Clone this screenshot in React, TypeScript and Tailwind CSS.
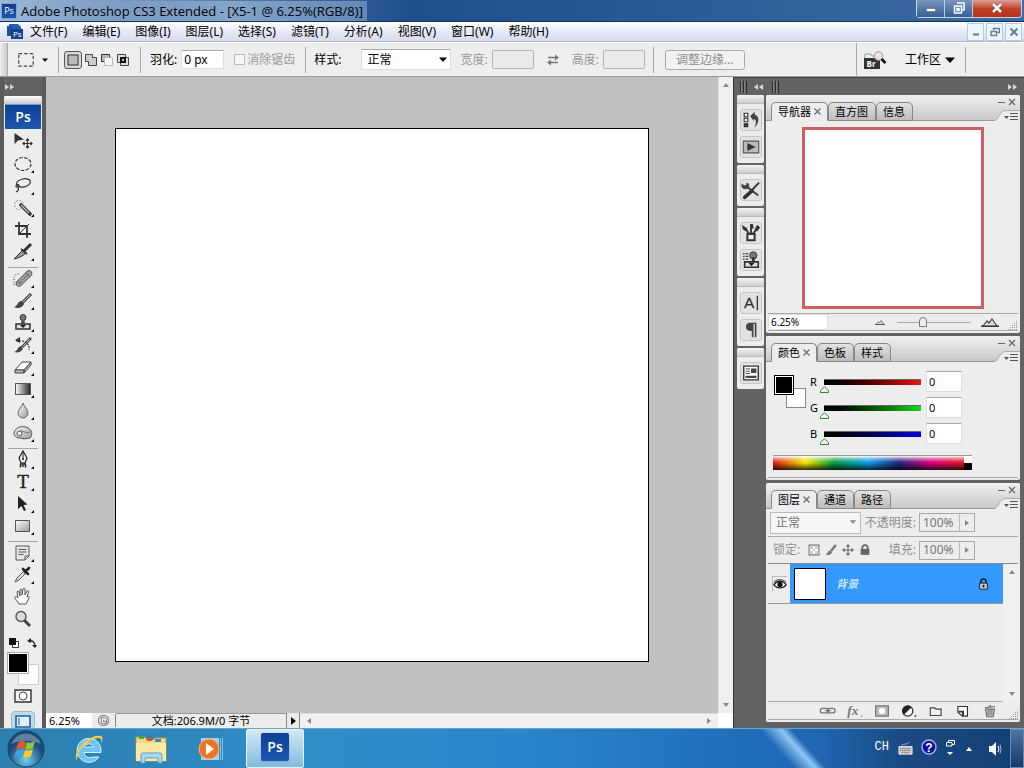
import { useState } from "react";
import type { ReactNode } from "react";
import clsx from "clsx";

const MENUS = ["文件(F)", "编辑(E)", "图像(I)", "图层(L)", "选择(S)", "滤镜(T)", "分析(A)", "视图(V)", "窗口(W)", "帮助(H)"];

interface Tool {
  name: string;
  icon: ReactNode;
  flyout?: boolean;
}

const ink = { stroke: "#333", fill: "none", strokeWidth: 1.2 };

const TOOL_GROUPS: Tool[][] = [
  [
    {
      name: "移动",
      icon: (
        <>
          <path d="M2.500 2v11l3.500-3.500 6-1z" fill="#333" />
          <path d="M15.500 8v9M11 12.500h9M14 9.500l1.500-1.500L17 9.500M14 15.500l1.500 1.500 1.500-1.500M12.500 11L11 12.500l1.500 1.500M18.500 11l1.500 1.500-1.500 1.500" {...ink} />
        </>
      ),
    },
    { name: "椭圆选框", flyout: true, icon: <ellipse cx="11" cy="11" rx="8" ry="6.500" {...ink} strokeDasharray="3.500 1.500" /> },
    {
      name: "套索",
      flyout: true,
      icon: (
        <>
          <ellipse cx="11.500" cy="8" rx="7" ry="4" {...ink} transform="rotate(-12 11 8)" />
          <path d="M5 9c-2 2-1 4 1 3s1-3-1-2M6 12c1 2 0 4-2 5" {...ink} />
        </>
      ),
    },
    {
      name: "快速选择",
      flyout: true,
      icon: (
        <>
          <path d="M9 8l9 9" stroke="#333" strokeWidth="3.600" strokeLinecap="round" />
          <path d="M9 8l8 8" stroke="#bbb" strokeWidth="1.400" />
          <circle cx="7" cy="8" r="4.500" stroke="#777" fill="none" strokeDasharray="1.500 1.500" />
        </>
      ),
    },
    {
      name: "裁剪",
      icon: (
        <>
          <path d="M7 3v12h12M3 7h12v12" stroke="#333" strokeWidth="1.800" fill="none" />
          <path d="M7 15L17 5" stroke="#333" />
        </>
      ),
    },
    {
      name: "切片",
      flyout: true,
      icon: (
        <>
          <path d="M2 18l9-9 3 3c-3 3-7 5-12 6z" fill="#999" stroke="#333" />
          <path d="M9 8l6 5" stroke="#333" strokeWidth="1.800" />
          <path d="M12 10l7-7" stroke="#333" strokeWidth="3" />
        </>
      ),
    },
  ],
  [
    {
      name: "修复画笔",
      flyout: true,
      icon: (
        <>
          <path d="M2 17V9a4 4 0 014-3h2" stroke="#333" fill="none" strokeDasharray="1 1.500" />
          <path d="M7 15.500L17 5.500" stroke="#555" strokeWidth="6.500" strokeLinecap="round" />
          <path d="M7 15.500L17 5.500" stroke="#a5a5a5" strokeWidth="4.800" strokeLinecap="round" />
          <path d="M7 15.500L17 5.500M6 13l3 3M14 5l4 4" stroke="#555" strokeDasharray="1 1.500" strokeWidth="1.500" />
        </>
      ),
    },
    {
      name: "画笔",
      flyout: true,
      icon: (
        <>
          <path d="M2 17c4-1 3-5 7-6l3 3c-2 4-6 5-10 3z" fill="#444" />
          <path d="M10 13l9-9" stroke="#444" strokeWidth="3" />
          <path d="M11 12l7-7" stroke="#ccc" />
        </>
      ),
    },
    {
      name: "仿制图章",
      flyout: true,
      icon: (
        <>
          <circle cx="11" cy="5.500" r="3" fill="#777" stroke="#333" />
          <path d="M9.500 8h3l.5 4h-4z" fill="#555" />
          <path d="M4 12h14v5H4z" fill="#ddd" stroke="#333" strokeWidth="1.500" />
          <path d="M8 13h6l-3 3z" fill="#222" />
        </>
      ),
    },
    {
      name: "历史记录画笔",
      flyout: true,
      icon: (
        <>
          <path d="M2 18c4-1 3-5 7-6l2 3c-2 3-5 4-9 3z" fill="#444" />
          <path d="M10 13l9-9" stroke="#444" strokeWidth="2.600" />
          <path d="M11 12l7-7" stroke="#ccc" />
          <path d="M4 7h6c4 0 8 4 7 9" {...ink} strokeDasharray="2 1" />
          <path d="M3 6l5-3v6z" fill="#333" />
        </>
      ),
    },
    {
      name: "橡皮擦",
      flyout: true,
      icon: (
        <>
          <path d="M3 14l7-8h9l-7 8z" fill="#fff" stroke="#444" />
          <path d="M3 14h9v3H3zM12 14l7-8v3l-7 8z" fill="#bbb" stroke="#444" />
        </>
      ),
    },
    { name: "渐变", flyout: true, icon: <rect x="3.500" y="5.500" width="15" height="11" fill="url(#toolGrad)" stroke="#555" /> },
    { name: "模糊", flyout: true, icon: <path d="M11 3c1 4 5 6 5 10a5 5 0 01-10 0c0-4 4-6 5-10z" fill="url(#softGrad)" stroke="#666" /> },
    {
      name: "海绵",
      flyout: true,
      icon: (
        <>
          <path d="M2 11c1-6 9-8 14-5 4 2 5 7 2 10-3 1-8 1-10 0-4 0-6-2-6-5z" fill="url(#softGrad)" stroke="#555" />
          <circle cx="7.500" cy="11.500" r="2.500" fill="#eee" stroke="#555" />
          <path d="M8 9c3-1 5 3 10 1" stroke="#777" fill="none" />
        </>
      ),
    },
  ],
  [
    {
      name: "钢笔",
      flyout: true,
      icon: (
        <>
          <path d="M11 2l4 7-2 5H9L7 9z" fill="#eee" stroke="#222" strokeWidth="1.200" />
          <path d="M11 2v8" stroke="#222" />
          <circle cx="11" cy="10" r="1" fill="#222" />
          <path d="M8 15h6M8.500 15.500v3M13.500 15.500v3M11 16v2" stroke="#222" strokeWidth="1.500" />
        </>
      ),
    },
    { name: "文字", flyout: true, icon: <text x="11" y="17" textAnchor="middle" fontSize="19" className="font-['Liberation_Serif',serif]" fill="#222" stroke="#222" strokeWidth=".4">T</text> },
    { name: "路径选择", flyout: true, icon: <path d="M6 3v13l3.500-3 2.500 5 2-1-2.500-5 4-.5z" fill="#222" /> },
    { name: "矩形", flyout: true, icon: <path d="M3.500 5.500h14v11h-14z" fill="url(#softGrad)" stroke="#555" /> },
  ],
  [
    {
      name: "注释",
      flyout: true,
      icon: (
        <>
          <path d="M4 4h13v10l-4 4H4z" fill="#e8e8e8" stroke="#555" />
          <path d="M17 14h-4v4M6.500 7.500h8M6.500 10h8M6.500 12.500h5" stroke="#555" fill="none" />
        </>
      ),
    },
    {
      name: "吸管",
      flyout: true,
      icon: (
        <>
          <path d="M3 18l2-4 7-7 2 2-7 7z" fill="#ddd" stroke="#555" />
          <path d="M11 5l5 5M13 8l4-4" stroke="#222" strokeWidth="2.600" strokeLinecap="round" />
        </>
      ),
    },
    {
      name: "抓手",
      icon: (
        <path d="M7 18c-1-3-5-5-4-7 1-1 2 0 3 1L5 6c0-1 2-1 2 0l1 4V4c0-1 2-1 2 0v5l1-6c0-1 2-1 2 0v6l2-4c1-1 2 0 1.500 1L15 11c2-1 3 0 2 1l-3 6z" fill="#fff" stroke="#555" />
      ),
    },
    {
      name: "缩放",
      icon: (
        <>
          <path d="M12 12l6 6" stroke="#444" strokeWidth="3" />
          <circle cx="9" cy="8.500" r="5" fill="#ddd" stroke="#555" strokeWidth="1.400" />
        </>
      ),
    },
  ],
];

const DOCK_GROUPS: Tool[][] = [
  [
    {
      name: "历史记录",
      icon: (
        <>
          <path d="M3.500 3.500h4v4h-4zM3.500 9h4v4h-4z" fill="#fff" stroke="#333" strokeWidth="1.200" />
          <path d="M3 14.500h5V19H3z" fill="#333" />
          <path d="M10 7l5-5v3c6 2 5 10 0 14 2-5 2-9-1-9v2z" fill="#444" />
        </>
      ),
    },
    {
      name: "动作",
      icon: (
        <>
          <path d="M2.500 4.500h17v13h-17z" fill="#bbb" stroke="#555" strokeWidth="1.200" />
          <path d="M7 6.500l9 4.500-9 4.500z" fill="#333" />
        </>
      ),
    },
  ],
  [
    {
      name: "工具预设",
      icon: (
        <>
          <path d="M6 7l13 10" stroke="#444" strokeWidth="2.200" />
          <path d="M1 4l3 2 2-1V3a3.500 3.500 0 01-1 7 4 4 0 01-4-6z" fill="#444" />
          <path d="M20 3l-8 8" stroke="#333" strokeWidth="2" />
          <path d="M12 12l-8 7" stroke="#333" strokeWidth="4" strokeLinecap="round" />
        </>
      ),
    },
  ],
  [
    {
      name: "画笔",
      icon: (
        <>
          <path d="M7 12h8v7H7z" fill="#eee" stroke="#333" strokeWidth="2.200" />
          <path d="M9 12L5 6M11 12V5M13 12l5-6" stroke="#333" strokeWidth="2" />
          <path d="M1 2l6 4-2 3-3-2zM10 1h3l1 5h-4zM15 7l3-5 3 3-3 4z" fill="#333" />
        </>
      ),
    },
    {
      name: "仿制源",
      icon: (
        <>
          <path d="M2 4h2M2 7h2M2 10h2M5 4h3M5 7h3M5 10h3" stroke="#444" strokeWidth="1.500" />
          <circle cx="13.500" cy="6" r="4" fill="#777" stroke="#333" />
          <path d="M12 8h3v5h-3z" fill="#333" />
          <path d="M4 13h15v6H4z" fill="#ddd" stroke="#333" strokeWidth="1.800" />
          <path d="M8 14h7l-3.500 4z" fill="#222" />
        </>
      ),
    },
  ],
  [
    {
      name: "字符",
      icon: (
        <>
          <text x="9" y="17" textAnchor="middle" fontSize="17" className="font-['Liberation_Sans',sans-serif]" fill="#333" stroke="#333" strokeWidth=".3">A</text>
          <path d="M18 3v16" stroke="#333" strokeWidth="1.500" />
        </>
      ),
    },
    { name: "段落", icon: <path d="M17 3v16h-1.800V4.500h-1.500V19h-1.800v-7H10a4.500 4.500 0 010-9z" fill="#444" /> },
  ],
  [
    {
      name: "图层复合",
      icon: (
        <>
          <path d="M3 3.500h16v15H3z" fill="#fff" stroke="#333" strokeWidth="1.500" />
          <path d="M11 6h6v5h-6zM5 14h12v2.500H5z" fill="#444" />
          <path d="M5 6.500h5M5 9h5M5 11.500h5" stroke="#444" />
        </>
      ),
    },
  ],
];

function Glyph({ children, className = "size-[22px]" }: { children: ReactNode; className?: string }) {
  return (
    <svg viewBox="0 0 22 22" className={clsx("shrink-0", className)} aria-hidden="true">
      {children}
    </svg>
  );
}

function Caret({ className }: { className?: string }) {
  return (
    <svg viewBox="0 0 10 6" className={clsx("shrink-0", className)} aria-hidden="true">
      <path d="M0 .5h10L5 6z" fill="currentColor" />
    </svg>
  );
}

function Divider() {
  return <span className="h-[26px] w-px shrink-0 bg-[#a8a8a8]" />;
}

function PsLogo({ className }: { className?: string }) {
  return (
    <span className={clsx("flex items-center justify-center bg-linear-to-b from-[#0f3f96] to-[#1d57b0] font-['Open_Sans',sans-serif] text-white", className)}>
      Ps
    </span>
  );
}

function TitleBar() {
  return (
    <header className="flex h-[22px] shrink-0 items-center border-b border-[#12325c] bg-linear-to-r from-[#9db8d6] via-[#1d4f8c] via-40% to-[#3c6ba3]">
      <PsLogo className="ml-px size-4 border border-[#79a5dd] text-[9px]" />
      <h1 className="ml-1 bg-linear-to-r from-[#b3c7dd00] from-0% via-[#86a5ca] via-60% to-[#6288b6] pr-1 font-['Open_Sans',sans-serif] text-[13px] leading-5 text-black">
        Adobe Photoshop CS3 Extended - [X5-1 @ 6.25%(RGB/8)]
      </h1>
      <div className="mr-0.5 mb-1 ml-auto flex h-[18px] rounded-b border border-t-0 border-[#c5d7ec]">
        <button type="button" aria-label="最小化" className="flex w-7 items-center justify-center border-r border-[#b8cae0] bg-linear-to-b from-[#7896bb] to-[#345f96]">
          <svg viewBox="0 0 12 12" className="size-3"><path d="M1.500 6.500h9v3h-9z" fill="#fff" stroke="#556" strokeWidth=".6" /></svg>
        </button>
        <button type="button" aria-label="还原" className="flex w-7 items-center justify-center border-r border-[#b8cae0] bg-linear-to-b from-[#7896bb] to-[#345f96]">
          <svg viewBox="0 0 12 12" className="size-3"><path d="M4 1h7v7H9M1.500 4h7v7h-7zM4 6.500h2v2H4z" fill="none" stroke="#fff" strokeWidth="1.500" /></svg>
        </button>
        <button type="button" aria-label="关闭" className="flex w-12 items-center justify-center rounded-br bg-linear-to-b from-[#d9a096] via-[#c2402a] to-[#b8301b]">
          <svg viewBox="0 0 12 12" className="size-3"><path d="M2 2l8 8M10 2l-8 8" stroke="#633" strokeWidth="3.600" /><path d="M2 2l8 8M10 2l-8 8" stroke="#fff" strokeWidth="2.600" /></svg>
        </button>
      </div>
    </header>
  );
}

function MenuBar() {
  const box = "flex h-[18px] w-[17px] items-center justify-center border border-[#b4cbe2] bg-[#eef6fd] text-[#5f7d9c]";
  return (
    <nav className="flex h-5 shrink-0 items-center border-b border-[#b4b8c8] bg-linear-to-b from-white via-[#e6eaf6] to-[#d6dcef]">
      <svg viewBox="0 0 16 16" className="ml-[7px] size-4 shrink-0" aria-hidden="true">
        <path d="M2 0h9l3 3v4H2z" fill="#1d62b5" />
        <path d="M0 2h5v10H0z" fill="#1b509c" />
        <path d="M4 5h12v10H4z" fill="#124389" />
        <text x="6" y="13" fontSize="8" fill="#fff" className="font-['Open_Sans',sans-serif]">Ps</text>
      </svg>
      <ul className="ml-[7px] flex gap-[15px] whitespace-nowrap">
        {MENUS.map((m) => (
          <li key={m}>
            <button type="button" className="block text-xs leading-5">{m}</button>
          </li>
        ))}
      </ul>
      <div className="ml-auto flex gap-0.5 pr-0.5">
        <button type="button" aria-label="最小化文档" className={box}>
          <svg viewBox="0 0 10 10" className="size-2.5"><path d="M2 7.500h6" stroke="currentColor" strokeWidth="2" /></svg>
        </button>
        <button type="button" aria-label="还原文档" className={box}>
          <svg viewBox="0 0 10 10" className="size-2.5"><path d="M3.500 3V1.500h6v4H7.500M1 4.500h5.500v4H1z" fill="none" stroke="currentColor" strokeWidth="1.400" /></svg>
        </button>
        <button type="button" aria-label="关闭文档" className={box}>
          <svg viewBox="0 0 10 10" className="size-2.5"><path d="M1.500 1.500l7 7M8.500 1.500l-7 7" stroke="currentColor" strokeWidth="2" /></svg>
        </button>
      </div>
    </nav>
  );
}

function SelectionModes() {
  const modes = [
    { label: "新选区", art: <rect x="2" y="2" width="10" height="10" fill="#bbb" stroke="#333" /> },
    { label: "添加到选区", art: <path d="M1.500 1.500h7v3h4v8h-8v-4h-3z" fill="#ccc" stroke="#444" /> },
    { label: "从选区减去", art: <><path d="M1.500 1.500h8v3h-5v4h-3z" fill="#bbb" stroke="#333" /><path d="M4.500 4.500h8v8h-8z" fill="#f6f6f6" stroke="#bbb" /></> },
    { label: "与选区交叉", art: <><path d="M1.500 1.500h8v8h-8zM4.500 4.500h8v8h-8z" fill="#ddd" stroke="#444" /><path d="M5 5h4v4H5z" fill="#ccc" stroke="#111" strokeWidth="2" /></> },
  ];
  return (
    <div className="flex items-center gap-0.5">
      {modes.map((m, i) => (
        <button
          key={m.label}
          type="button"
          aria-label={m.label}
          className={clsx(i === 0 && "rounded-[3px] border border-[#555] bg-[#d8d8d8] p-px")}
        >
          <svg viewBox="0 0 14 14" className="size-3.5">{m.art}</svg>
        </button>
      ))}
    </div>
  );
}

function OptionsBar() {
  const disabledBox = "ml-1 h-[19px] w-[42px] rounded-xs border border-[#b5b5b5] bg-[#ebebeb]";
  return (
    <div className="flex h-[35px] shrink-0 items-center border-t border-b border-t-white border-b-[#9a9a9a] bg-[#eee] text-xs leading-5 whitespace-nowrap">
      <span className="h-full w-2 shrink-0 border-r border-[#aaa] bg-linear-to-r from-[#eee] to-[#ccc]" />
      <svg viewBox="0 0 16 14" className="ml-2.5 h-3.5 w-4 shrink-0" aria-hidden="true">
        <rect x=".7" y=".7" width="14.500" height="12.500" fill="none" stroke="#444" strokeWidth="1.200" strokeDasharray="3.500 2" />
      </svg>
      <Caret className="mr-2.5 ml-2 h-1 w-1.5" />
      <Divider />
      <div className="mr-2.5 ml-[5px]"><SelectionModes /></div>
      <Divider />
      <label htmlFor="feather" className="ml-[9px]">羽化:</label>
      <input id="feather" defaultValue="0 px" className="ml-1 h-[19px] w-[43px] border border-[#ddd] border-t-[#aaa] bg-white px-0.5 font-['Noto_Sans',sans-serif] text-xs" />
      <label className="mr-2.5 ml-2.5 flex items-center gap-0.5 text-[#9a9a9a]">
        <input type="checkbox" disabled className="size-[11px] appearance-none border border-[#bbb] bg-[#f6f6f6]" />
        消除锯齿
      </label>
      <Divider />
      <label htmlFor="style" className="ml-2">样式:</label>
      <div className="relative ml-5">
        <select id="style" className="block h-[21px] w-[90px] appearance-none border border-[#ddd] border-t-[#aaa] bg-white pl-[5px] text-xs leading-[19px]">
          <option>正常</option>
        </select>
        <Caret className="pointer-events-none absolute top-2 right-1 h-[5px] w-2" />
      </div>
      <label htmlFor="w" className="ml-[9px] text-[#9a9a9a]">宽度:</label>
      <input id="w" disabled className={disabledBox} />
      <svg viewBox="0 0 14 12" className="mr-3 ml-3 h-3 w-3.5 shrink-0" aria-hidden="true">
        <path d="M2 3.500h8M4 8.500h8" stroke="#777" strokeWidth="1.300" />
        <path d="M9 .5l4 3-4 3zM5 5.500l-4 3 4 3z" fill="#777" />
      </svg>
      <label htmlFor="h" className="text-[#9a9a9a]">高度:</label>
      <input id="h" disabled className={disabledBox} />
      <span className="w-2" />
      <Divider />
      <button type="button" disabled className="ml-[11px] h-5 w-20 rounded-[3px] border border-[#aaa] bg-[#f2f2f2] text-xs leading-[18px] text-[#8e8e8e]">
        调整边缘...
      </button>
      <div className="ml-auto flex h-full w-[168px] items-center border-l border-[#aaa]">
        <button type="button" aria-label="转到 Bridge" className="ml-[7px]">
          <svg viewBox="0 0 24 18" className="h-[18px] w-6">
            <path d="M1 3h6l1 2h6v5H1z" fill="#eee" stroke="#999" />
            <path d="M0 7h16v11H0z" fill="#333" />
            <text x="2.500" y="15.500" fontSize="8" fontWeight="700" fill="#fff" className="font-['Open_Sans',sans-serif]">Br</text>
            <circle cx="14.500" cy="5" r="4.300" fill="#e6e6e6" stroke="#999" />
            <path d="M17.500 8l4 4" stroke="#111" strokeWidth="2.600" />
          </svg>
        </button>
        <button type="button" className="ml-[17px] flex items-center gap-1 pr-2.5">工作区<Caret className="h-1.5 w-2.5" /></button>
        <Divider />
      </div>
    </div>
  );
}

function DoubleArrow({ left }: { left?: boolean }) {
  return (
    <svg viewBox="0 0 10 6" className={clsx("h-1.5 w-2.5 shrink-0", left && "rotate-180")} aria-hidden="true">
      <path d="M0 0l4 3-4 3zM5 0l4 3-4 3z" fill="#d8d8d8" />
    </svg>
  );
}

function Toolbox() {
  return (
    <aside className="flex w-[46px] shrink-0 flex-col overflow-hidden border-x-4 border-[#5b5b5b] bg-[#636363]">
      <div className="flex h-[19px] shrink-0 items-center pl-px"><DoubleArrow /></div>
      <div className="flex min-h-0 flex-1 flex-col rounded-t-xs bg-[#ededed]">
        <span className="h-2 shrink-0 rounded-t-xs bg-linear-to-b from-white to-[#c8c8c8]" />
        <PsLogo className="mx-px h-[25px] shrink-0 border-t border-[#6a9be0] text-sm font-semibold" />
        <div className="flex shrink-0 flex-col gap-1 pt-0.5">
          {TOOL_GROUPS.map((group, g) => (
            <div key={g} className={clsx(g > 0 && "mx-1 border-t border-[#a5a5a5]")}>
              {group.map((tool) => (
                <button key={tool.name} type="button" aria-label={tool.name} className="relative mx-auto block size-[22px]">
                  <Glyph>{tool.icon}</Glyph>
                  {tool.flyout && (
                    <svg viewBox="0 0 4 4" className="absolute right-0 bottom-0.5 size-[3px]"><path d="M4 0v4H0z" /></svg>
                  )}
                </button>
              ))}
            </div>
          ))}
        </div>
        <div className="mt-2 flex shrink-0 items-center gap-2 pl-[5px]">
          <button type="button" aria-label="默认颜色">
            <svg viewBox="0 0 10 10" className="size-2.5"><path d="M3.500 3.500h6v6h-6z" fill="#fff" stroke="#333" /><path d="M0 0h7v7H0z" fill="#111" /></svg>
          </button>
          <button type="button" aria-label="切换颜色">
            <svg viewBox="0 0 10 10" className="size-2.5"><path d="M2 3c3-1 6 1 6 5" stroke="#333" strokeWidth="1.500" fill="none" /><path d="M0 3l4-3v5zM5 7h5l-2 3z" fill="#222" /></svg>
          </button>
        </div>
        <div className="relative mt-[5px] ml-1 h-8 w-[31px] shrink-0">
          <button type="button" aria-label="背景色" className="absolute right-0 bottom-0 size-[21px] border border-[#ccc] bg-white" />
          <button type="button" aria-label="前景色" className="absolute top-0 left-0 size-5 border border-white bg-black outline outline-[#aaa]" />
        </div>
        <button type="button" aria-label="快速蒙版" className="mt-1 shrink-0 self-center">
          <svg viewBox="0 0 18 14" className="h-3.5 w-[18px]"><path d="M1 1h16v12H1z" fill="#fff" stroke="#333" strokeWidth="1.400" /><circle cx="9" cy="7" r="4" fill="#fff" stroke="#444" /></svg>
        </button>
        <button type="button" aria-label="屏幕模式" className="mt-2 shrink-0 self-center rounded-sm border border-[#9bb] bg-[#bfd9f0] px-[3px] pt-[3px]">
          <svg viewBox="0 0 16 13" className="h-[13px] w-4"><path d="M1 1h14v11H1z" fill="#dff0ff" stroke="#2b5b9b" strokeWidth="1.600" /><path d="M4 3v7" stroke="#7ab" strokeWidth="2" /></svg>
        </button>
      </div>
    </aside>
  );
}

function Arrow({ dir, color = "#888" }: { dir: "up" | "down" | "left" | "right"; color?: string }) {
  const turn = { up: "", down: "rotate-180", left: "-rotate-90", right: "rotate-90" }[dir];
  return (
    <svg viewBox="0 0 6 4" className={clsx("h-1 w-1.5 shrink-0", turn)} aria-hidden="true">
      <path d="M0 4l3-4 3 4z" fill={color} />
    </svg>
  );
}

function DocumentArea() {
  return (
    <main className="flex min-w-0 flex-1 flex-col border-r border-[#333] bg-[#c0c0c0]">
      <div className="flex min-h-0 flex-1">
        <div className="flex min-w-0 flex-1 items-center justify-center overflow-hidden">
          <div className="aspect-square h-[84%] border border-black bg-white" />
        </div>
        <div className="flex w-[15px] flex-col items-center justify-between border-l border-[#ddd] bg-[#f0f0f0] py-1.5">
          <Arrow dir="up" />
          <Arrow dir="down" />
        </div>
      </div>
      <div className="flex h-[15px] shrink-0 items-center bg-[#ececec] text-[11px] leading-[15px]">
        <input aria-label="显示比例" defaultValue="6.25%" className="h-full w-[46px] bg-white pl-[3px] font-['Noto_Sans',sans-serif] text-[11px]" />
        <span className="flex w-6 justify-center border-r border-[#888]">
          <svg viewBox="0 0 14 14" className="size-[13px]"><circle cx="7" cy="7" r="5.500" fill="#ddd" stroke="#888" strokeWidth="1.400" /><path d="M5 4h3l2 2v4H5zM7 6v2h3" fill="#fff" stroke="#777" /></svg>
        </span>
        <span className="w-[170px] border-t border-[#999] text-center text-[11px] leading-[14px]">文档:206.9M/0 字节</span>
        <button type="button" aria-label="状态栏选项" className="flex h-full w-[14px] items-center justify-center border-x border-[#888]">
          <svg viewBox="0 0 5 8" className="h-2 w-[5px]"><path d="M0 0l5 4-5 4z" /></svg>
        </button>
        <div className="flex h-full flex-1 items-center justify-between border-t border-[#ddd] bg-[#f0f0f0] px-1.5">
          <Arrow dir="left" />
          <Arrow dir="right" />
        </div>
        <span className="h-full w-[15px] bg-white" />
      </div>
    </main>
  );
}

function IconDock() {
  return (
    <div className="flex w-[27px] shrink-0 flex-col gap-0.5">
      {DOCK_GROUPS.map((group, i) => (
        <div key={i} className="rounded-xs bg-[#ececec] pb-[5px]">
          <div className="h-[9px] rounded-t-xs border-b border-[#bbb] bg-linear-to-b from-[#f4f4f4] to-[#ccc]" />
          <div className="flex flex-col items-center gap-[5px] pt-[5px]">
            {group.map((p) => (
              <button key={p.name} type="button" aria-label={p.name} className="rounded-[3px] border border-[#c6c6c6] bg-[#e2e2e2]">
                <Glyph className="size-5">{p.icon}</Glyph>
              </button>
            ))}
          </div>
        </div>
      ))}
    </div>
  );
}

function Panel({ tabs, className, children }: { tabs: string[]; className?: string; children: ReactNode }) {
  const [active, setActive] = useState(tabs[0]);
  return (
    <section className={clsx("flex flex-col rounded-xs bg-[#ededed] pb-0.5", className)}>
      <div className="flex h-[26px] shrink-0 items-end rounded-t-xs border-b border-[#999] bg-linear-to-b from-[#f0f0f0] to-[#c9c9c9]">
        <div role="tablist" className="-mb-px flex pl-[5px] text-[11px] leading-[17px]">
          {tabs.map((t) => (
            <button
              key={t}
              role="tab"
              type="button"
              aria-selected={t === active}
              onClick={() => setActive(t)}
              className={clsx(
                "flex h-[19px] items-center gap-[3px] rounded-t-[5px] border border-[#888] pl-1.5 whitespace-nowrap",
                t === active ? "border-b-[#ededed] bg-[#ededed] pr-1.5" : "bg-linear-to-b from-[#e2e2e2] to-[#bcbcbc] pr-[7px]",
              )}
            >
              {t}
              {t === active && (
                <svg viewBox="0 0 7 7" className="size-[7px]"><path d="M.5.5l6 6M6.500.5l-6 6" stroke="#666" strokeWidth="1.100" /></svg>
              )}
            </button>
          ))}
        </div>
        <div className="ml-auto flex flex-col items-end">
          <div className="flex items-center gap-1.5 pr-1 pb-1">
            <svg viewBox="0 0 18 8" className="h-2 w-[18px]" aria-hidden="true"><path d="M0 4.500h7M11 1l6 6M17 1l-6 6" stroke="#666" strokeWidth="1.200" /></svg>
          </div>
          <button type="button" aria-label="面板菜单">
            <svg viewBox="0 0 26 11" className="-mb-px block h-[11px] w-[26px]">
              <path d="M0 11C5 10 5 .5 12 .5h14V11z" fill="#ededed" />
              <path d="M0 10.500C5 10 5 .5 12 .5h14" fill="none" stroke="#aaa" />
              <path d="M10 6h5l-2.500 3zM16 3h8v1h-8zM16 6h8v1h-8zM16 9h8v1h-8z" fill="#555" />
            </svg>
          </button>
        </div>
      </div>
      {children}
    </section>
  );
}

function ResizeGrip() {
  return (
    <svg viewBox="0 0 10 10" className="size-2.5 shrink-0 self-end" aria-hidden="true">
      <path d="M1 9.500h9M3 7.500h7M5 5.500h5M7 3.500h3M9 1.500h1" stroke="#999" strokeDasharray="1 1" />
    </svg>
  );
}

function Mountains({ className }: { className: string }) {
  return (
    <svg viewBox="0 0 18 9" className={clsx("shrink-0", className)} aria-hidden="true">
      <path d="M2 8l4-5 2 2 3-4 5 7" fill="#ddd" stroke="#444" strokeWidth="1.200" />
      <path d="M0 8.200h18" stroke="#222" strokeWidth="1.400" />
    </svg>
  );
}

function NavigatorPanel() {
  return (
    <Panel tabs={["导航器", "直方图", "信息"]}>
      <div className="mx-auto mt-1.5 size-[182px] border-3 border-[#cd5f62] bg-white" />
      <div className="mx-0.5 mt-1 flex h-[18px] items-center border-t border-b border-[#aaa] pr-px">
        <input aria-label="缩放" defaultValue="6.25%" className="h-4 w-[60px] border border-[#ddd] bg-white pl-0.5 font-['Noto_Sans',sans-serif] text-[10px]" />
        <Mountains className="mr-3 ml-auto h-[5px] w-2.5" />
        <input
          type="range"
          aria-label="缩放滑块"
          defaultValue={33}
          className="h-2.5 w-[74px] appearance-none bg-[linear-gradient(#aaa,#aaa)] bg-[length:100%_1px] bg-center bg-no-repeat [&::-webkit-slider-thumb]:h-2.5 [&::-webkit-slider-thumb]:w-2 [&::-webkit-slider-thumb]:appearance-none [&::-webkit-slider-thumb]:rounded-t-full [&::-webkit-slider-thumb]:border [&::-webkit-slider-thumb]:border-[#777] [&::-webkit-slider-thumb]:bg-[#eee]"
        />
        <Mountains className="mr-2 ml-2.5 h-[9px] w-[18px]" />
        <ResizeGrip />
      </div>
    </Panel>
  );
}

const CHANNELS = [
  { label: "R", bar: "bg-linear-to-r from-black to-[#ee1111]" },
  { label: "G", bar: "bg-linear-to-r from-black to-[#11dd11]" },
  { label: "B", bar: "bg-linear-to-r from-black to-[#0000e0]" },
];

function ColorPanel() {
  return (
    <Panel tabs={["颜色", "色板", "样式"]}>
      <div className="flex px-2 pt-[9px]">
        <div className="relative mt-[5px] ml-px h-8 w-[31px] shrink-0">
          <button type="button" aria-label="背景色" className="absolute right-0 bottom-0 size-5 border border-[#888] bg-white" />
          <button type="button" aria-label="前景色" className="absolute top-0 left-0 size-[18px] border border-white bg-black outline outline-black" />
        </div>
        <div className="ml-1 flex flex-col gap-[5px]">
          {CHANNELS.map((c) => (
            <div key={c.label} className="flex h-[21px] items-center font-['Noto_Sans',sans-serif] text-[11px]">
              <label htmlFor={c.label} className="w-3.5 pt-0.5">{c.label}</label>
              <div className="relative">
                <div className={clsx("h-1.5 w-[97px] border-t border-[#666]", c.bar)} />
                <input type="range" aria-label={c.label} min={0} max={255} defaultValue={0} className="absolute inset-0 w-full opacity-0" />
                <svg viewBox="0 0 9 7" className="pointer-events-none absolute top-[7px] -left-1 h-[7px] w-[9px]" aria-hidden="true">
                  <path d="M4.500.7l4 4v1.800h-8V4.700z" fill="#efe" stroke="#3b7a3b" />
                </svg>
              </div>
              <input id={c.label} defaultValue="0" className="ml-[5px] h-[21px] w-9 border border-[#ddd] border-t-[#aaa] bg-white px-0.5" />
            </div>
          ))}
        </div>
      </div>
      <div className="mx-[7px] mt-[11px] mb-[7px] flex h-[15px] w-[199px] border-t border-[#999]">
        <div className="flex-1 bg-[linear-gradient(to_bottom,#fff_0%,#fff8_15%,#fff0_45%,#0000_50%,#000c_100%),linear-gradient(to_right,#e01b1b,#f2e600_17%,#0a9a3c_32%,#0a9fe8_50%,#24247e_66%,#e0007e_83%,#e01b1b)]" />
        <div className="w-2 bg-linear-to-b from-white from-50% to-black to-50%" />
      </div>
      <div className="mx-0.5 border-t border-[#aaa]" />
    </Panel>
  );
}

function PercentField({ id, label }: { id: string; label: string }) {
  return (
    <>
      <label htmlFor={id} className="ml-auto">{label}</label>
      <div className="ml-[3px] flex h-[19px] w-14 border border-[#aaa]">
        <input id={id} disabled defaultValue="100%" className="w-[39px] pl-[3px] font-['Noto_Sans',sans-serif] text-xs text-[#777]" />
        <button type="button" disabled aria-label={`${label}滑块`} className="flex flex-1 items-center justify-center border-l border-[#bbb]">
          <Arrow dir="right" />
        </button>
      </div>
    </>
  );
}

function LayersPanel() {
  const lockIcons = [
    { name: "锁定透明像素", art: <><path d="M2 2h18v18H2z" fill="#fff" stroke="#777" strokeWidth="2" /><path d="M4 4h5v5H4zM13 4h5v5h-5zM9 9h4v4H9zM4 13h5v5H4zM13 13h5v5h-5z" fill="#ccc" /></> },
    { name: "锁定图像像素", art: <><path d="M1 20c5-2 3-8 9-8l3 3c-2 5-7 6-12 5z" fill="#777" /><path d="M11 13l9-11" stroke="#777" strokeWidth="4.500" /></> },
    { name: "锁定位置", art: <><path d="M11 2v18M2 11h18" stroke="#666" strokeWidth="2" /><path d="M11 0l4 5H7zM11 22l4-5H7zM0 11l5-4v8zM22 11l-5-4v8z" fill="#666" /></> },
    { name: "锁定全部", art: <><path d="M6 10V7a5 5 0 0110 0v3" stroke="#666" strokeWidth="3" fill="none" /><path d="M3 9h16v11H3z" fill="#666" /></> },
  ];
  const actions = [
    { name: "链接图层", art: <><rect x="0" y="7" width="13" height="7" rx="3.500" fill="none" stroke="#777" strokeWidth="2" /><rect x="11" y="7" width="12" height="7" rx="3.500" fill="none" stroke="#777" strokeWidth="2" /><path d="M7 10.500h10" stroke="#777" strokeWidth="1.500" /></> },
    { name: "图层样式", art: <><text x="0" y="17" fontSize="21" fontStyle="italic" fontWeight="700" fill="#777" className="font-['Liberation_Serif',serif]">fx</text><path d="M21 18h3v2h-3z" fill="#999" /></> },
    { name: "蒙版", art: <><path d="M2 3h20v16H2z" fill="#bbb" stroke="#777" strokeWidth="2" /><circle cx="12" cy="11" r="6" fill="#fff" stroke="#999" /></> },
    { name: "调整图层", art: <><circle cx="10" cy="11" r="8" fill="#fff" stroke="#333" strokeWidth="2" /><path d="M16 5L4 17A8.500 8.500 0 014 5a8.500 8.500 0 0112 0z" fill="#222" /><path d="M20 18h4l-2 3z" fill="#222" /></> },
    { name: "新建组", art: <path d="M3 6h7l2 2h8v10H3z" fill="#f0f0f0" stroke="#444" strokeWidth="1.800" /> },
    { name: "新建图层", art: <><path d="M4 4h15v15h-8l-7-6z" fill="#fff" stroke="#333" strokeWidth="1.800" /><path d="M5 12h7v7" stroke="#333" strokeWidth="3" fill="none" /></> },
    { name: "删除图层", art: <><path d="M5 8h14l-2 12H7z" fill="#ddd" stroke="#666" strokeWidth="1.800" /><path d="M9 9v9M12 9v9M15 9v9M4 6l16-2M10 3h4" stroke="#666" strokeWidth="1.600" /></> },
  ];
  return (
    <Panel tabs={["图层", "通道", "路径"]} className="min-h-0 flex-1">
      <div className="mx-0.5 flex h-7 shrink-0 items-center border-b border-[#aaa] pr-[43px] text-xs leading-5 text-[#8e8e8e]">
        <div className="relative ml-0.5">
          <select disabled aria-label="混合模式" className="block h-[22px] w-[91px] appearance-none border border-[#bbb] bg-[#f6f6f6] pl-[5px] text-[#777] opacity-100">
            <option>正常</option>
          </select>
          <Caret className="absolute top-2 right-1 h-1 w-2" />
        </div>
        <PercentField id="opacity" label="不透明度:" />
      </div>
      <div className="mx-0.5 flex h-[27px] shrink-0 items-center border-b border-[#888] pr-[43px] text-xs leading-5 text-[#8e8e8e]">
        <span className="mr-2 ml-[5px]">锁定:</span>
        <div className="flex gap-[5px]">
          {lockIcons.map((l) => (
            <button key={l.name} type="button" disabled aria-label={l.name}><Glyph className="size-3">{l.art}</Glyph></button>
          ))}
        </div>
        <PercentField id="fill" label="填充:" />
      </div>
      <div className="ml-0.5 flex min-h-0 flex-1">
        <ul className="flex-1 border-b border-[#aaa]">
          <li className="flex h-10 border-b border-[#999] bg-[#3399ff]">
            <button type="button" aria-label="图层可见性" className="flex w-[22px] items-center justify-center bg-[#ededed]">
              <svg viewBox="0 0 16 16" className="size-[15px] border-t border-l border-[#bbb]">
                <path d="M1 9c3-5 10-6 14 0-4 5-11 4-14 0z" fill="#fff" stroke="#222" strokeWidth="1.500" />
                <circle cx="8" cy="8.500" r="3" fill="#111" />
                <path d="M1 6c3-4 10-4 14 0" stroke="#222" fill="none" />
              </svg>
            </button>
            <div className="flex flex-1 items-center pr-3.5 pl-1 text-white">
              <span className="size-8 border border-black bg-white" />
              <span className="ml-2.5 text-[11px] leading-5 italic">背景</span>
              <svg viewBox="0 0 12 14" className="ml-auto h-3 w-[11px]" aria-hidden="true">
                <path d="M3 6V4a3 3 0 016 0v2" stroke="#111" strokeWidth="1.600" fill="none" />
                <path d="M1.500 6h9v7h-9z" fill="#ccc" stroke="#111" />
                <path d="M5 8h2v3H5z" fill="#111" />
              </svg>
            </div>
          </li>
        </ul>
        <div className="flex w-[17px] flex-col items-center justify-between bg-[#f0f0f0] py-1.5">
          <Arrow dir="up" />
          <Arrow dir="down" />
        </div>
      </div>
      <div className="mx-0.5 flex h-[18px] shrink-0 items-center justify-end border-b border-[#aaa]">
        <div className="mr-2.5 flex gap-[11px]">
          {actions.map((a) => (
            <button key={a.name} type="button" aria-label={a.name}>
              <svg viewBox="0 0 24 22" className="h-3.5 w-4 overflow-visible">{a.art}</svg>
            </button>
          ))}
        </div>
        <ResizeGrip />
      </div>
    </Panel>
  );
}

function Grip() {
  return <span className="h-3 w-[7px] shrink-0 bg-[repeating-linear-gradient(to_right,#2c2c2c_0px,#2c2c2c_1px,#858585_1px,#858585_2px,#636363_2px,#636363_3px)]" />;
}

function Dock() {
  return (
    <aside className="flex w-[290px] shrink-0 flex-col bg-[#636363]">
      <div className="flex h-[18px] shrink-0 items-center border-t border-[#444] px-1.5">
        <Grip />
        <span className="mr-[9px] ml-1.5 flex"><DoubleArrow left /></span>
        <Grip />
        <span className="ml-auto flex"><DoubleArrow /></span>
      </div>
      <div className="flex min-h-0 flex-1 gap-0.5 pr-1 pb-1.5 pl-[3px]">
        <IconDock />
        <div className="flex min-w-0 flex-1 flex-col gap-[3px]">
          <NavigatorPanel />
          <ColorPanel />
          <LayersPanel />
        </div>
      </div>
    </aside>
  );
}

function Taskbar() {
  return (
    <footer className="flex h-10 shrink-0 items-center border-t border-[#6ba5cf] bg-[linear-gradient(48deg,transparent_75%,#8fc4f2_77%,transparent_78%),linear-gradient(to_right,#2c7fae,#2f8dc8_30%,#2a86cc_50%,#2070bc_70%,#1f66b2_80%,#1a4a82_88%,#123f72)]">
      <button type="button" aria-label="开始" className="ml-[7px] shrink-0">
        <svg viewBox="0 0 38 38" className="size-[38px]">
          <circle cx="19" cy="19" r="18" fill="url(#orb)" stroke="#17405f" />
          <path d="M11 13c3-2 5-2 8-1l-2 7c-3-1-5-1-8 1z" fill="#e8572a" />
          <path d="M20 12c3 1 5 1 8-1l-2 7c-3 2-5 2-8 1z" fill="#8cc63f" />
          <path d="M9 21c3-2 5-2 8-1l-2 7c-3-1-5-1-8 1z" fill="#3fa0e6" />
          <path d="M18 20c3 1 5 1 8-1l-2 7c-3 2-5 2-8 1z" fill="#fcc92f" />
          <path d="M4 14a16 16 0 0130 0c-8-4-22-4-30 0z" fill="#fff" opacity=".3" />
        </svg>
      </button>
      <button type="button" aria-label="Internet Explorer" className="ml-7 shrink-0">
        <svg viewBox="0 0 32 32" className="size-8">
          <path d="M28 18a12 12 0 10-2 6h-7a5.500 5.500 0 01-8-4.500h17zM11 14a5.500 5.500 0 0110 0z" fill="#6cc5f5" stroke="#d9f1ff" fillRule="evenodd" />
          <path d="M4 28C-2 20 16 0 28 3c2 1 2 4 0 7 1-4 0-5-3-5C15 6 3 19 4 28z" fill="#f6cf3d" />
        </svg>
      </button>
      <button type="button" aria-label="资源管理器" className="ml-[29px] shrink-0">
        <svg viewBox="0 0 34 30" className="h-[30px] w-[34px]">
          <path d="M2 3h9l2 3h6l2-2h11v23H2z" fill="#f3d983" stroke="#b99339" />
          <path d="M5 2h5v3H5z" fill="#41a447" /><path d="M13 4h5v3h-5z" fill="#d9512c" /><path d="M21 5h6v3h-6z" fill="#3b86cf" />
          <path d="M2 9h30v18H2z" fill="#fbeaa6" />
          <path d="M7 29v-8q0-2 2-2h17q2 0 2 2v8h-4v-5H11v5z" fill="#a9d8f2" stroke="#5da0c8" />
        </svg>
      </button>
      <button type="button" aria-label="Media Player" className="ml-[29px] shrink-0">
        <svg viewBox="0 0 28 26" className="h-[26px] w-7">
          <path d="M4 2h18v22H4z" fill="#a9cfe8" /><path d="M23 2h1v22h-1zM25 2h1v22h-1z" fill="#8bc0e4" />
          <circle cx="12" cy="13" r="10" fill="#ee7423" stroke="#f8b27d" />
          <path d="M9 7l8 6-8 6z" fill="#fff" />
        </svg>
      </button>
      <button type="button" aria-label="Adobe Photoshop" className="ml-[21px] flex h-full w-[58px] shrink-0 items-start justify-center rounded-xs border border-[#e4f3fb] bg-linear-to-b from-[#d5e9f4] to-[#7fbbe0] pt-[3px]">
        <PsLogo className="size-7 rounded-xs text-sm font-semibold shadow" />
      </button>
      <div className="ml-auto flex h-full items-center text-white">
        <span className="pb-1 font-['Liberation_Mono',monospace] text-xs">CH</span>
        <svg viewBox="0 0 16 16" className="ml-[9px] size-[15px]"><path d="M1 6h14v8H1z" fill="#ccc" stroke="#eee" /><path d="M2 8h12M2 10h12M4 12.500h8" stroke="#666" strokeDasharray="1.500 .8" /><path d="M4 5c0-3 6 0 8-4" stroke="#bbb" fill="none" /></svg>
        <svg viewBox="0 0 16 16" className="mb-1 ml-2 size-4"><circle cx="8" cy="8" r="7" fill="#11119b" stroke="#aab4e6" strokeWidth="1.400" /><text x="8" y="12.500" textAnchor="middle" fontSize="12" fontWeight="700" fill="#fff" className="font-['Liberation_Sans',sans-serif]">?</text></svg>
        <svg viewBox="0 0 10 18" className="mb-1 ml-2 h-[18px] w-2.5"><path d="M3.500 4V2.500h6v4H7M1.500 4.500H7v3.500H1.500z" fill="none" stroke="#fff" /><path d="M2 14h6l-3 3z" fill="#fff" /></svg>
        <span className="ml-[11px]"><Arrow dir="up" color="#fff" /></span>
        <svg viewBox="0 0 14 14" className="ml-4 size-3.5"><path d="M1 4h3l4-4v14L4 10H1z" fill="#fff" /><path d="M10 4q2 3 0 6" stroke="#fff" fill="none" /><path d="M12 2.500q2 4.500 0 9" stroke="#9bd" fill="none" /></svg>
        <button type="button" aria-label="显示桌面" className="ml-2 h-full w-3.5 border border-[#6589b3] bg-linear-to-b from-[#4d769f] to-[#163a66]" />
      </div>
    </footer>
  );
}

export default function App() {
  return (
    <div className="flex h-screen flex-col overflow-hidden bg-[#636363] font-['Noto_Sans','Noto_Sans_CJK_SC',sans-serif] text-black">
      <svg className="absolute size-0" aria-hidden="true">
        <defs>
          <linearGradient id="toolGrad"><stop stopColor="#fff" /><stop offset="1" stopColor="#222" /></linearGradient>
          <linearGradient id="softGrad" x2="1" y2="1"><stop stopColor="#fff" /><stop offset="1" stopColor="#999" /></linearGradient>
          <radialGradient id="orb" cy=".8"><stop stopColor="#6fd0f2" /><stop offset="1" stopColor="#1d4a78" /></radialGradient>
        </defs>
      </svg>
      <TitleBar />
      <MenuBar />
      <OptionsBar />
      <div className="flex min-h-0 flex-1">
        <Toolbox />
        <DocumentArea />
        <Dock />
      </div>
      <Taskbar />
    </div>
  );
}
